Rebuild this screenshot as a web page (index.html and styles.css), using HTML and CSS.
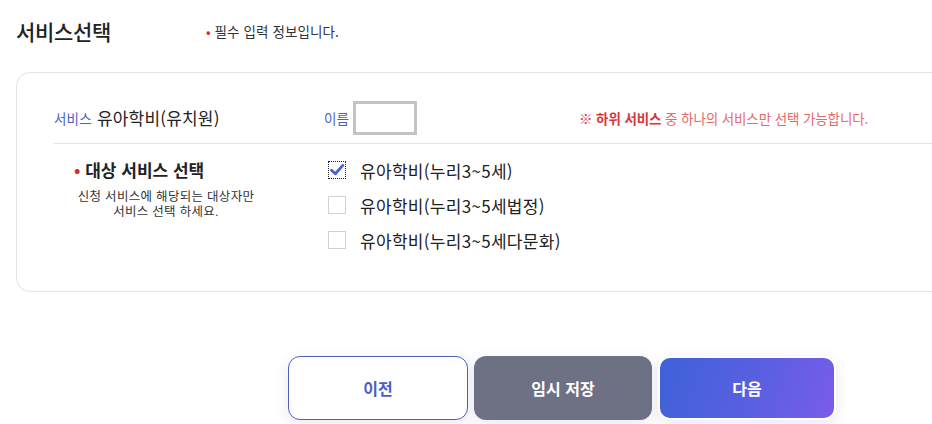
FILE: index.html
```html
<!DOCTYPE html>
<html lang="ko">
<head>
<meta charset="utf-8">
<title>서비스선택</title>
<link rel="stylesheet" href="styles.css">
</head>
<body>
<div class="page">
  <div class="head">
    <h1 class="title">서비스선택</h1>
    <p class="req"><span class="dot">•</span> 필수 입력 정보입니다.</p>
  </div>
  <section class="card">
    <div class="row1">
      <div class="svc"><span class="lbl">서비스</span> <span class="svc-name">유아학비(유치원)</span></div>
      <div class="name"><span class="lbl">이름</span><span class="namebox"></span></div>
      <div class="notice"><span class="mark">※</span> <b>하위 서비스</b> 중 하나의 서비스만 선택 가능합니다.</div>
    </div>
    <div class="row2">
      <div class="target">
        <div class="t-title"><span class="dot">•</span> 대상 서비스 선택</div>
        <div class="t-sub">신청 서비스에 해당되는 대상자만<br>서비스 선택 하세요.</div>
      </div>
      <ul class="opts">
        <li class="opt"><span class="cb checked"><svg viewBox="0 0 18 18" width="18" height="18"><path d="M3.5 9.2 L7.4 12.8 L14.8 4.4" fill="none" stroke="#4a5fd6" stroke-width="2.8" stroke-linecap="round" stroke-linejoin="round"/></svg></span><span>유아학비(누리3~5세)</span></li>
        <li class="opt"><span class="cb"></span><span>유아학비(누리3~5세법정)</span></li>
        <li class="opt"><span class="cb"></span><span>유아학비(누리3~5세다문화)</span></li>
      </ul>
    </div>
  </section>
  <div class="actions">
    <button class="btn prev">이전</button>
    <button class="btn save">임시 저장</button>
    <button class="btn next">다음</button>
  </div>
</div>
</body>
</html>
```
FILE: styles.css
```css
html, body {
  margin: 0;
  padding: 0;
  background: #fff;
  overflow: hidden;
}
body {
  font-family: "Noto Sans CJK KR", "Noto Sans", sans-serif;
  color: #222;
  width: 932px;
  height: 424px;
}
.page {
  padding: 13px 0 0 16px;
}
.head {
  display: flex;
  align-items: center;
  height: 36px;
}
.title {
  margin: 0;
  font-size: 21px;
  font-weight: 500;
  letter-spacing: -0.3px;
  color: #222;
  width: 190px;
}
.req {
  margin: 0;
  font-size: 13.5px;
  color: #333;
  letter-spacing: 0.1px;
}
.dot {
  color: #d42b35;
}
.card {
  margin-top: 23px;
  width: 960px;
  height: 220px;
  border: 1px solid #e2e2e2;
  border-radius: 14px;
  box-sizing: border-box;
  padding: 0 0 0 37px;
}
.row1 {
  display: flex;
  align-items: center;
  height: 71px;
  border-bottom: 1px solid #e4e4e4;
  box-sizing: border-box;
  padding-top: 23px;
  padding-bottom: 4px;
}
.svc {
  width: 270px;
  display: flex;
  align-items: center;
  gap: 5px;
}
.lbl {
  color: #4a5fc1;
  font-size: 13.5px;
  letter-spacing: 0.2px;
}
.svc-name {
  font-size: 17px;
  color: #222;
  letter-spacing: 0.2px;
}
.name {
  width: 255px;
  display: flex;
  align-items: center;
  gap: 4px;
}
.namebox {
  display: inline-block;
  width: 58px;
  height: 28px;
  border: 3px solid #c4c4c4;
  flex: none;
}
.notice {
  font-size: 13.5px;
  color: #e46a6c;
  letter-spacing: -0.1px;
}
.notice .mark {
  color: #d8363c;
}
.notice b {
  color: #d8363c;
  font-weight: 700;
}
.row2 {
  display: flex;
  padding-top: 14px;
}
.target {
  width: 274px;
}
.t-title {
  padding-left: 20px;
  font-size: 17px;
  font-weight: 700;
  letter-spacing: 0;
  color: #222;
  line-height: 24px;
}
.t-sub {
  width: 224px;
  text-align: center;
  font-family: "Liberation Sans", "Noto Sans CJK KR", sans-serif;
  font-size: 12.5px;
  line-height: 15px;
  color: #333;
  margin-top: 8px;
  letter-spacing: 0.3px;
}
.opts {
  list-style: none;
  margin: 0;
  padding: 3px 0 0 0;
  display: flex;
  flex-direction: column;
  gap: 17px;
}
.opt {
  display: flex;
  align-items: center;
  gap: 14px;
  font-size: 17px;
  color: #222;
  letter-spacing: 0.3px;
  height: 18px;
}
.cb {
  width: 18px;
  height: 18px;
  box-sizing: border-box;
  border: 1px solid #d2d2d2;
  background: #fff;
  display: inline-block;
  flex: none;
}
.cb.checked {
  border: 1px dotted #222;
}
.cb svg {
  display: block;
  margin: -1px;
}
.actions {
  display: flex;
  gap: 6px;
  margin-top: 64px;
  padding-left: 272px;
}
.btn {
  font-family: inherit;
  font-size: 16px;
  font-weight: 700;
  height: 64px;
  border-radius: 12px;
  cursor: pointer;
  letter-spacing: 0;
  box-shadow: 0 4px 14px rgba(80, 80, 140, 0.12);
}
.prev {
  width: 180px;
  background: #fff;
  color: #4a5fc1;
  border: 1px solid #5060c0;
}
.save {
  width: 178px;
  background: #6e7084;
  color: #fff;
  border: none;
}
.next {
  width: 178px;
  color: #fff;
  border: 2px solid #fff;
  background: linear-gradient(110deg, #3e62d8 0%, #5a5fe2 55%, #7a5ce9 100%);
}
```
